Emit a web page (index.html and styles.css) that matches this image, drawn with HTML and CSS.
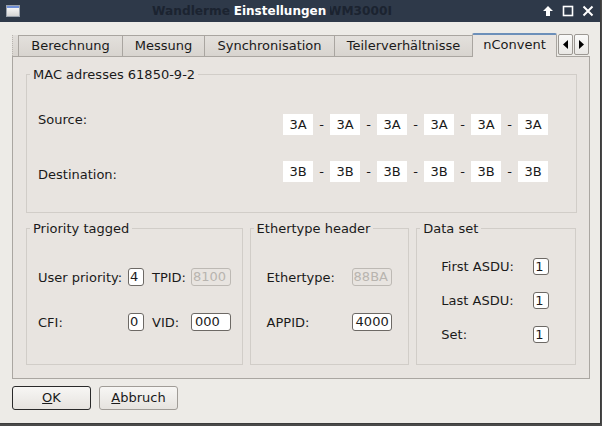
FILE: index.html
```html
<!DOCTYPE html>
<html>
<head>
<meta charset="utf-8">
<link rel="stylesheet" href="styles.css">
</head>
<body>
<div class="window">
  <div class="titlebar">
    <div class="appicon"><div class="appicon-bar"></div></div>
    <div class="title-wrap">
      <span class="ghost">Wandlermesseinrichtung WM3000I</span>
      <span class="title">Einstellungen</span>
    </div>
    <div class="wm-buttons">
      <svg class="wm-btn" width="12" height="12" viewBox="0 0 12 12"><path d="M6 1 L11 6 L8 6 L8 11 L4 11 L4 6 L1 6 Z" fill="#fff"/></svg>
      <svg class="wm-btn" width="12" height="12" viewBox="0 0 12 12"><rect x="1.5" y="1.5" width="9" height="9" fill="none" stroke="#fff" stroke-width="1.6"/></svg>
      <svg class="wm-btn" width="12" height="12" viewBox="0 0 12 12"><path d="M1.5 1.5 L10.5 10.5 M10.5 1.5 L1.5 10.5" stroke="#fff" stroke-width="2"/></svg>
    </div>
  </div>
  <div class="content">
    <div class="tabbar">
      <div class="tab-sliver"></div>
      <div class="tab w-ber">Berechnung</div>
      <div class="tab w-mes">Messung</div>
      <div class="tab w-syn">Synchronisation</div>
      <div class="tab w-tei">Teilerverhältnisse</div>
      <div class="tab active w-ncv">nConvent</div>
      <div class="scroll-btn"><svg width="7" height="9" viewBox="0 0 7 9"><path d="M6 0 L6 9 L1 4.5 Z" fill="#000"/></svg></div>
      <div class="scroll-btn"><svg width="7" height="9" viewBox="0 0 7 9"><path d="M1 0 L1 9 L6 4.5 Z" fill="#000"/></svg></div>
    </div>
    <div class="pane">
      <fieldset class="group mac">
        <legend>MAC adresses 61850-9-2</legend>
        <div class="mac-inner">
          <div class="mac-labels">
            <span>Source:</span>
            <span>Destination:</span>
          </div>
          <div class="mac-values">
            <div class="mac-row">
              <span class="mac-box">3A</span><span class="dash">-</span>
              <span class="mac-box">3A</span><span class="dash">-</span>
              <span class="mac-box">3A</span><span class="dash">-</span>
              <span class="mac-box">3A</span><span class="dash">-</span>
              <span class="mac-box">3A</span><span class="dash">-</span>
              <span class="mac-box">3A</span>
            </div>
            <div class="mac-row">
              <span class="mac-box">3B</span><span class="dash">-</span>
              <span class="mac-box">3B</span><span class="dash">-</span>
              <span class="mac-box">3B</span><span class="dash">-</span>
              <span class="mac-box">3B</span><span class="dash">-</span>
              <span class="mac-box">3B</span><span class="dash">-</span>
              <span class="mac-box">3B</span>
            </div>
          </div>
        </div>
      </fieldset>
      <div class="groups-row">
        <fieldset class="group prio">
          <legend>Priority tagged</legend>
          <div class="inner prio-inner">
            <div class="frow">
              <span class="lbl w90">User priority:</span>
              <span class="field small">4</span>
              <span class="lbl w39 ml8">TPID:</span>
              <span class="field wide disabled">8100</span>
            </div>
            <div class="frow r2">
              <span class="lbl w90">CFI:</span>
              <span class="field small">0</span>
              <span class="lbl w39 ml8">VID:</span>
              <span class="field wide">000</span>
            </div>
          </div>
        </fieldset>
        <fieldset class="group eth">
          <legend>Ethertype header</legend>
          <div class="inner eth-inner">
            <div class="frow">
              <span class="lbl w85">Ethertype:</span>
              <span class="field wide disabled">88BA</span>
            </div>
            <div class="frow r2">
              <span class="lbl w85">APPID:</span>
              <span class="field wide">4000</span>
            </div>
          </div>
        </fieldset>
        <fieldset class="group dset">
          <legend>Data set</legend>
          <div class="inner dset-inner">
            <div class="drow">
              <span class="lbl w92">First ASDU:</span>
              <span class="field small d">1</span>
            </div>
            <div class="drow">
              <span class="lbl w92">Last ASDU:</span>
              <span class="field small d">1</span>
            </div>
            <div class="drow">
              <span class="lbl w92">Set:</span>
              <span class="field small d">1</span>
            </div>
          </div>
        </fieldset>
      </div>
    </div>
    <div class="buttons">
      <div class="btn default"><span class="u">O</span>K</div>
      <div class="btn"><span class="u">A</span>bbruch</div>
    </div>
  </div>
</div>
</body>
</html>
```
FILE: styles.css
```css
html, body {
  margin: 0;
  padding: 0;
}
body {
  width: 602px;
  height: 426px;
  overflow: hidden;
  background: #4a4a4a;
  font-family: "DejaVu Sans", sans-serif;
  font-size: 13px;
  color: #1a1a1a;
}
.window {
  width: 601px;
  height: 424px;
  background: #edebe7;
  border-right: 1px solid #3c3c3c;
  border-bottom: 1px solid #3c3c3c;
  box-sizing: border-box;
}
.titlebar {
  height: 22px;
  background: #2e3949;
  display: flex;
  align-items: center;
  padding-left: 6px;
}
.appicon {
  width: 14px;
  height: 12px;
  background: linear-gradient(#ffffff, #d4d4d4);
  box-sizing: border-box;
  border: 1px solid #9aa2ad;
}
.appicon-bar {
  height: 2px;
  background: #6f8fd8;
}
.title-wrap {
  flex: 1;
  position: relative;
  display: flex;
  justify-content: center;
  align-items: center;
  height: 22px;
  padding-left: 2px;
}
.ghost {
  position: absolute;
  left: 50%;
  top: 4px;
  transform: translateX(-50%);
  margin-left: -7px;
  white-space: nowrap;
  font-weight: bold;
  font-size: 12.2px;
  color: #1b2330;
  line-height: 15px;
}
.title {
  position: relative;
  font-weight: bold;
  font-size: 12px;
  color: #ffffff;
  background: #2e3949;
  padding: 0 4px;
  line-height: 20px;
}
.wm-buttons {
  display: flex;
  gap: 8px;
  padding-right: 6px;
  padding-left: 4px;
  align-items: center;
}
.wm-btn {
  display: block;
}
.content {
  padding-top: 11px;
}
.tabbar {
  display: flex;
  align-items: flex-end;
  margin-left: 12px;
  height: 23px;
  position: relative;
  z-index: 1;
}
.tab-sliver {
  width: 6px;
  height: 21px;
  box-sizing: border-box;
  background: linear-gradient(#e2dfdb, #d8d4cf);
  border-left: 1px dotted #b9b5b0;
}
.tab {
  height: 21px;
  box-sizing: border-box;
  border: 1px solid #a9a5a0;
  border-bottom: none;
  border-right: none;
  background: linear-gradient(#e3e0dc, #d8d4cf);
  text-align: center;
  line-height: 20px;
  white-space: nowrap;
}
.w-ber { width: 104px; }
.w-mes { width: 82px; }
.w-syn { width: 130px; }
.w-tei { width: 138px; }
.tab.active {
  width: 85px;
  height: 24px;
  margin-bottom: -1px;
  background: #e8e4e0;
  border: 1px solid #a9a5a0;
  border-top: 2px solid #6c8fb9;
  border-bottom: none;
  border-radius: 2px 2px 0 0;
  line-height: 20px;
}
.scroll-btn {
  width: 15px;
  height: 21px;
  margin-left: 1px;
  margin-bottom: 1px;
  box-sizing: border-box;
  border: 1px solid #9c9893;
  border-radius: 2px;
  background: linear-gradient(#fafaf9, #e9e7e4);
  display: flex;
  align-items: center;
  justify-content: center;
}
.pane {
  margin-left: 12px;
  width: 578px;
  height: 323px;
  box-sizing: border-box;
  border: 1px solid #aaa6a1;
  background: #e8e4e0;
  padding: 10px 13px 0 13px;
}
.group {
  margin: 0;
  padding: 0;
  box-sizing: border-box;
  border: 1px solid #d1cdc8;
  border-radius: 0;
  min-width: 0;
}
.group legend {
  padding: 0 3px;
  margin-left: 3px;
  font-size: 13px;
  line-height: 15px;
}
.mac {
  width: 551px;
  height: 146px;
}
.mac-inner {
  display: flex;
  padding-left: 11px;
}
.mac-labels {
  width: 245px;
  display: flex;
  flex-direction: column;
  padding-top: 30px;
  gap: 40px;
  line-height: 15px;
}
.mac-values {
  display: flex;
  flex-direction: column;
  padding-top: 32px;
  gap: 26px;
}
.mac-row {
  display: flex;
  align-items: center;
  height: 21px;
}
.mac-box {
  width: 30px;
  height: 21px;
  background: #ffffff;
  text-align: center;
  line-height: 21px;
}
.dash {
  width: 17px;
  text-align: center;
}
.groups-row {
  display: flex;
  gap: 7px;
  margin-top: 8px;
}
.prio {
  width: 217px;
  height: 144px;
}
.eth {
  width: 160px;
  height: 144px;
}
.dset {
  width: 160px;
  height: 144px;
}
.inner {
  padding-top: 32px;
}
.prio-inner { padding-left: 11px; }
.eth-inner { padding-left: 16px; }
.dset-inner { padding-left: 24px; padding-top: 22px; }
.frow {
  display: flex;
  align-items: center;
  height: 18px;
}
.frow.r2 {
  margin-top: 27px;
}
.drow {
  display: flex;
  align-items: center;
  height: 17px;
  margin-bottom: 17px;
}
.lbl {
  white-space: nowrap;
}
.w90 { width: 90px; }
.w39 { width: 39px; }
.w85 { width: 85px; }
.w92 { width: 92px; }
.ml8 { margin-left: 8px; }
.field {
  box-sizing: border-box;
  height: 18px;
  border: 1px solid #6d6965;
  border-radius: 3px;
  background: #ffffff;
  line-height: 16px;
  padding: 0 2px;
  overflow: hidden;
  white-space: nowrap;
}
.field.small {
  width: 16px;
  padding: 0 1px;
}
.field.d {
  height: 17px;
}
.field.wide {
  width: 40px;
  padding-left: 3px;
}
.field.disabled {
  background: transparent;
  border-color: #bdb9b4;
  color: #b8b4af;
  padding-left: 1px;
}
.buttons {
  display: flex;
  gap: 8px;
  margin-left: 12px;
  margin-top: 7px;
}
.btn {
  width: 79px;
  height: 24px;
  box-sizing: border-box;
  border: 1px solid #a09c97;
  border-radius: 3px;
  background: linear-gradient(#f7f6f4, #e6e3df);
  text-align: center;
  line-height: 22px;
}
.btn.default {
  border-color: #2a2a2a;
}
.u {
  text-decoration: underline;
}
```
